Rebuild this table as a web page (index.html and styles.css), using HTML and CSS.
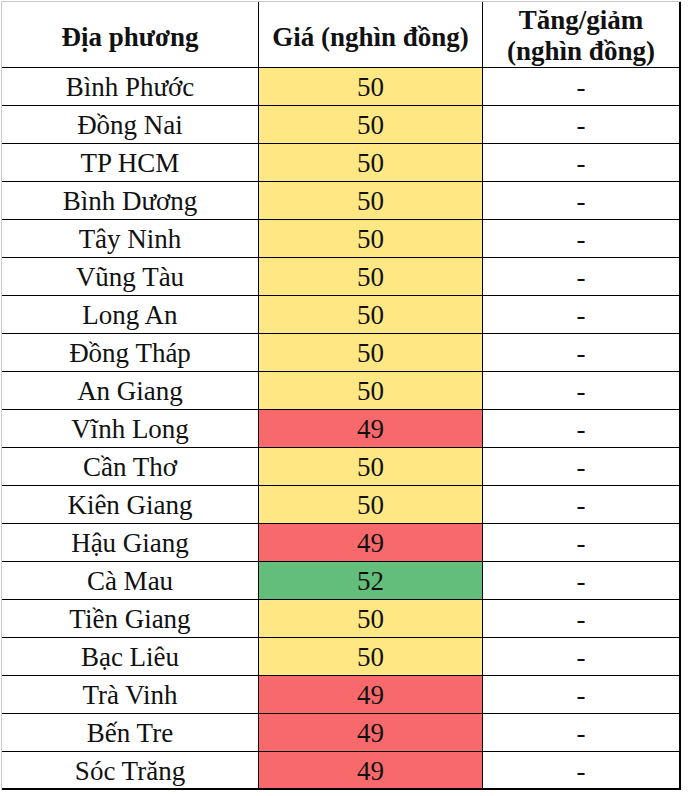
FILE: index.html
```html
<!DOCTYPE html>
<html>
<head>
<meta charset="utf-8">
<link rel="stylesheet" href="styles.css">
</head>
<body>
<div class="frame">
<table class="prices">
  <colgroup><col class="c1"><col class="c2"><col class="c3"></colgroup>
  <thead>
    <tr>
      <th>Địa phương</th>
      <th>Giá (nghìn đồng)</th>
      <th class="two">Tăng/giảm<br>(nghìn đồng)</th>
    </tr>
  </thead>
  <tbody>
    <tr><td>Bình Phước</td><td class="y">50</td><td class="d">-</td></tr>
    <tr><td>Đồng Nai</td><td class="y">50</td><td class="d">-</td></tr>
    <tr><td>TP HCM</td><td class="y">50</td><td class="d">-</td></tr>
    <tr><td>Bình Dương</td><td class="y">50</td><td class="d">-</td></tr>
    <tr><td>Tây Ninh</td><td class="y">50</td><td class="d">-</td></tr>
    <tr><td>Vũng Tàu</td><td class="y">50</td><td class="d">-</td></tr>
    <tr><td>Long An</td><td class="y">50</td><td class="d">-</td></tr>
    <tr><td>Đồng Tháp</td><td class="y">50</td><td class="d">-</td></tr>
    <tr><td>An Giang</td><td class="y">50</td><td class="d">-</td></tr>
    <tr><td>Vĩnh Long</td><td class="r">49</td><td class="d">-</td></tr>
    <tr><td>Cần Thơ</td><td class="y">50</td><td class="d">-</td></tr>
    <tr><td>Kiên Giang</td><td class="y">50</td><td class="d">-</td></tr>
    <tr><td>Hậu Giang</td><td class="r">49</td><td class="d">-</td></tr>
    <tr><td>Cà Mau</td><td class="g">52</td><td class="d">-</td></tr>
    <tr><td>Tiền Giang</td><td class="y">50</td><td class="d">-</td></tr>
    <tr><td>Bạc Liêu</td><td class="y">50</td><td class="d">-</td></tr>
    <tr><td>Trà Vinh</td><td class="r">49</td><td class="d">-</td></tr>
    <tr><td>Bến Tre</td><td class="r">49</td><td class="d">-</td></tr>
    <tr class="last"><td>Sóc Trăng</td><td class="r">49</td><td class="d">-</td></tr>
  </tbody>
</table>
</div>
</body>
</html>
```
FILE: styles.css
```css
html, body {
  margin: 0;
  padding: 0;
  background: #ffffff;
}
body {
  font-family: "Liberation Serif";
  color: #111111;
}
.frame {
  padding: 1px 0 0 1px;
  width: 687px;
}
.prices {
  border-collapse: separate;
  border-spacing: 0;
  table-layout: fixed;
  border-left: 1px solid #c9c9c9;
  border-top: 1px solid #c9c9c9;
  width: 680px;
}
.c1 { width: 257px; }
.c2 { width: 224px; }
.c3 { width: 198px; }
.prices th,
.prices td {
  box-sizing: border-box;
  padding: 0;
  text-align: center;
  vertical-align: top;
  border-right: 1px solid #000;
  border-bottom: 1px solid #000;
  font-family: "Liberation Serif";
  font-size: 27px;
  white-space: nowrap;
}
.prices th {
  height: 66px;
  font-weight: bold;
  line-height: 31px;
  padding-top: 20px;
}
.prices th.two {
  padding-top: 3px;
}
.prices td {
  height: 38px;
  line-height: 30px;
  padding-top: 4px;
}
.prices th:last-child,
.prices td:last-child {
  border-right-width: 2px;
}
.prices tr.last td {
  border-bottom-width: 2px;
}
.prices td.y { background: #ffe884; }
.prices td.r { background: #f8696b; }
.prices td.g { background: #63be7b; }
```
